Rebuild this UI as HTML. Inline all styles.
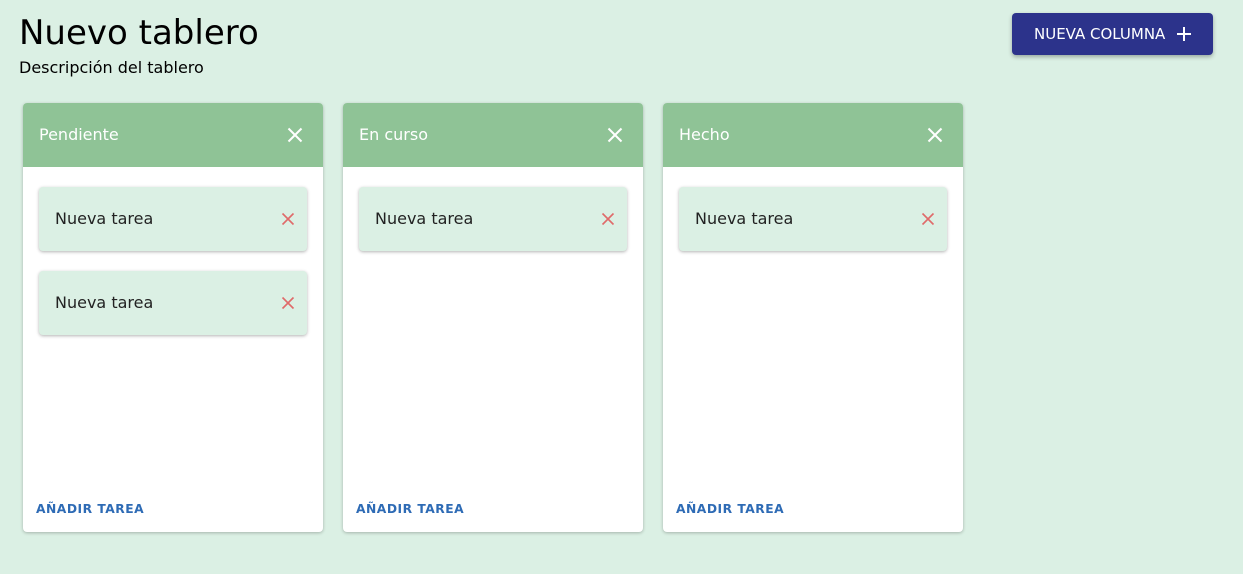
<!DOCTYPE html>
<html><head><meta charset="utf-8"><style>
*{box-sizing:border-box;margin:0;padding:0}
body{width:1243px;height:574px;background:#dbf0e4;font-family:"DejaVu Sans","Liberation Sans",sans-serif;position:relative;overflow:hidden}
h1{position:absolute;left:19px;top:12px;font-size:34px;font-weight:normal;color:#000;line-height:42px}
.desc{position:absolute;left:19px;top:58px;font-size:16px;color:#000}
.btn{position:absolute;left:1012px;top:13px;width:201px;height:42px;background:#2c338b;border-radius:4px;color:#fff;font-size:15px;display:flex;align-items:center;padding-left:22px;padding-bottom:1px;box-shadow:0 2px 4px rgba(0,0,0,.3)}
.btn svg{margin-left:12px}
.col{position:absolute;top:103px;width:300px;height:429px;background:#fff;border-radius:4px;box-shadow:0 1px 3px rgba(0,0,0,.25);overflow:hidden}
.hd{height:64px;background:#8fc396;color:#fff;font-size:16px;display:flex;align-items:center;padding-left:16px;padding-bottom:2px;position:relative}
.hd svg{position:absolute;right:20px;top:24px}
.task{position:absolute;left:16px;width:268px;height:64px;background:#dbf0e4;border-radius:4px;box-shadow:0 1px 3px rgba(0,0,0,.3);font-size:16px;color:#222;display:flex;align-items:center;padding-left:16px;padding-bottom:2px}
.task svg{position:absolute;right:12px;top:25px}
.add{position:absolute;left:13px;top:399px;font-size:12.3px;font-weight:bold;color:#2e6bb5;letter-spacing:.5px}
</style></head><body>
<h1>Nuevo tablero</h1>
<div class="desc">Descripción del tablero</div>
<div class="btn">NUEVA COLUMNA<svg width="14" height="14" viewBox="0 0 14 14"><path d="M7 0V14M0 7H14" stroke="#fff" stroke-width="2"/></svg></div>

<div class="col" style="left:23px">
<div class="hd">Pendiente<svg width="16" height="16"><path d="M1.5 1.5L14.5 14.5M14.5 1.5L1.5 14.5" stroke="#fff" stroke-width="2"/></svg></div>
<div class="task" style="top:84px">Nueva tarea<svg width="14" height="14"><path d="M1.5 1.5L12.5 12.5M12.5 1.5L1.5 12.5" stroke="#e06a6a" stroke-width="1.6"/></svg></div>
<div class="task" style="top:168px">Nueva tarea<svg width="14" height="14"><path d="M1.5 1.5L12.5 12.5M12.5 1.5L1.5 12.5" stroke="#e06a6a" stroke-width="1.6"/></svg></div>
<div class="add">AÑADIR TAREA</div>
</div>

<div class="col" style="left:343px">
<div class="hd">En curso<svg width="16" height="16"><path d="M1.5 1.5L14.5 14.5M14.5 1.5L1.5 14.5" stroke="#fff" stroke-width="2"/></svg></div>
<div class="task" style="top:84px">Nueva tarea<svg width="14" height="14"><path d="M1.5 1.5L12.5 12.5M12.5 1.5L1.5 12.5" stroke="#e06a6a" stroke-width="1.6"/></svg></div>
<div class="add">AÑADIR TAREA</div>
</div>

<div class="col" style="left:663px">
<div class="hd">Hecho<svg width="16" height="16"><path d="M1.5 1.5L14.5 14.5M14.5 1.5L1.5 14.5" stroke="#fff" stroke-width="2"/></svg></div>
<div class="task" style="top:84px">Nueva tarea<svg width="14" height="14"><path d="M1.5 1.5L12.5 12.5M12.5 1.5L1.5 12.5" stroke="#e06a6a" stroke-width="1.6"/></svg></div>
<div class="add">AÑADIR TAREA</div>
</div>
</body></html>
